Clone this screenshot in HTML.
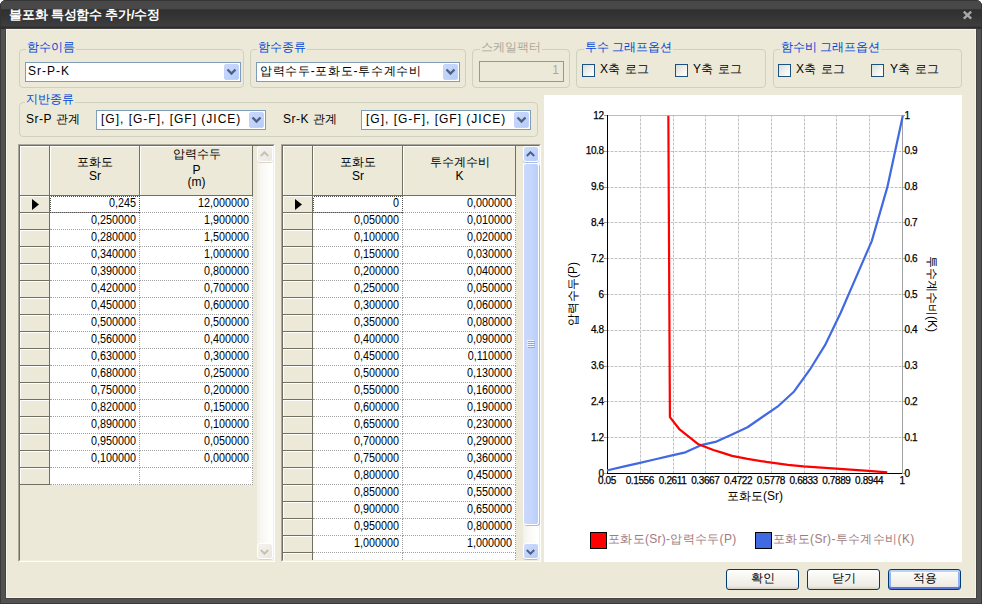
<!DOCTYPE html><html><head><meta charset="utf-8"><style>
*{box-sizing:border-box;margin:0;padding:0}
html,body{width:982px;height:605px;overflow:hidden;background:#fff;font-family:"Liberation Sans",sans-serif;font-size:12px;color:#000}
.a{position:absolute}
#win{position:absolute;left:0;top:0;width:982px;height:604px;background:#525252;border-radius:6px 6px 0 0;overflow:hidden;box-shadow:inset 0 0 0 1px #3A3A3A}
#tb{position:absolute;left:0;top:0;width:982px;height:29px;border-left:1px solid #333;border-right:1px solid #333;background:linear-gradient(#353535 0,#353535 1px,#484848 1px,#484848 9px,#3a3a3a 9px,#303030 10px,#323232 14px,#3e3e3e 26px,#2e2e2e 27px,#2e2e2e 29px)}
#ttl{left:9px;top:6px;color:#fff;font-weight:bold;font-size:13px;white-space:nowrap;letter-spacing:-0.2px}
#close{left:962px;top:10px;width:11px;height:10px}
#body{position:absolute;left:6px;top:29px;width:970px;height:569px;background:#ECE9D8;border:1px solid #F7F5E8;box-shadow:0 0 0 1px #434343}
.grp{position:absolute;border:1px solid #D0D0BF;border-radius:4px}
.gl{position:absolute;color:#0046D5;background:#ECE9D8;padding:0 1px;white-space:nowrap;line-height:13px}
.combo{position:absolute;border:1px solid #7F9DB9;background:#fff;height:20px}
.combo .t{position:absolute;left:2px;top:2px;white-space:nowrap;line-height:13px}
.ddb{position:absolute;right:1px;top:1px;width:15px;height:16px;border-radius:2px;background:linear-gradient(135deg,#CAD8FB 0%,#BFD2FA 60%,#B3CBF9 100%);border:1px solid #C3D3FD}
.ddb svg{position:absolute;left:1px;top:3px}
.chk{position:absolute;width:13px;height:13px;border:1px solid #1C5180;background:linear-gradient(135deg,#DCDCD7 0%,#F0F0EB 50%,#FFFFFF 100%)}
.lbl{position:absolute;white-space:nowrap;line-height:13px}
.btn{position:absolute;width:73px;height:21px;border:1px solid #003C74;border-radius:3px;background:linear-gradient(#FFFFFF 0%,#F6F5F0 40%,#ECEBE4 85%,#D6D0C5 100%);text-align:center;line-height:17px}
.grid{position:absolute;background:#ECE9D8;overflow:hidden}
.hc{position:absolute;background:#ECE9D8;border-right:1px solid #716F64;border-bottom:1px solid #716F64;box-shadow:inset 1px 1px 0 #fff;text-align:center;line-height:12px}
.dc{position:absolute;background:#fff;text-align:right;line-height:16px;padding-right:2px;letter-spacing:-0.4px;font-size:11px}
.num{font-size:13px;transform:scaleX(0.83);transform-origin:100% 50%}
</style></head><body>
<div id="win"><div id="tb"></div>
<div class="a" id="ttl">불포화 특성함수 추가/수정</div>
<svg class="a" id="close" width="11" height="10" viewBox="0 0 11 10"><path d="M1.8 1.6 L9.2 8.6 M9.2 1.6 L1.8 8.6" stroke="#A8A8A8" stroke-width="2.4"/></svg>
<div id="body"></div></div>
<div class="grp" style="left:19px;top:49px;width:225px;height:39px"></div>
<div class="gl" style="left:26px;top:41px">함수이름</div>
<div class="combo" style="left:25px;top:62px;width:216px"><span class="t" style="left:2px;letter-spacing:1px">Sr-P-K</span><div class="ddb"><svg width="11" height="8" viewBox="0 0 11 8"><path d="M1.5 1.5 L5.5 5.5 L9.5 1.5" fill="none" stroke="#4D6185" stroke-width="2.4"/></svg></div></div>
<div class="grp" style="left:250px;top:49px;width:216px;height:39px"></div>
<div class="gl" style="left:257px;top:41px">함수종류</div>
<div class="combo" style="left:256px;top:62px;width:204px"><span class="t" style="left:3px;letter-spacing:0.7px">압력수두-포화도-투수계수비</span><div class="ddb"><svg width="11" height="8" viewBox="0 0 11 8"><path d="M1.5 1.5 L5.5 5.5 L9.5 1.5" fill="none" stroke="#4D6185" stroke-width="2.4"/></svg></div></div>
<div class="grp" style="left:472px;top:49px;width:98px;height:39px"></div>
<div class="gl" style="left:480px;top:41px;color:#ACA899">스케일팩터</div>
<div class="combo" style="left:479px;top:61px;width:85px;height:21px;background:#ECE9D8"><span class="t" style="left:auto;right:4px;color:#ACA899">1</span></div>
<div class="grp" style="left:576px;top:49px;width:190px;height:39px"></div>
<div class="gl" style="left:584px;top:41px">투수 그래프옵션</div>
<div class="chk" style="left:582px;top:64px"></div><div class="lbl" style="left:600px;top:63px;letter-spacing:0.45px">X축 로그</div>
<div class="chk" style="left:675px;top:64px"></div><div class="lbl" style="left:693px;top:63px;letter-spacing:0.45px">Y축 로그</div>
<div class="grp" style="left:773px;top:49px;width:189px;height:39px"></div>
<div class="gl" style="left:780px;top:41px">함수비 그래프옵션</div>
<div class="chk" style="left:778px;top:64px"></div><div class="lbl" style="left:796px;top:63px;letter-spacing:0.45px">X축 로그</div>
<div class="chk" style="left:871px;top:64px"></div><div class="lbl" style="left:890px;top:63px;letter-spacing:0.45px">Y축 로그</div>
<div class="grp" style="left:19px;top:102px;width:519px;height:35px"></div>
<div class="gl" style="left:25px;top:93px">지반종류</div>
<div class="lbl" style="left:26px;top:113px;letter-spacing:0.5px">Sr-P 관계</div>
<div class="combo" style="left:96px;top:110px;width:170px"><span class="t" style="left:4px;letter-spacing:1px">[G], [G-F], [GF] (JICE)</span><div class="ddb"><svg width="11" height="8" viewBox="0 0 11 8"><path d="M1.5 1.5 L5.5 5.5 L9.5 1.5" fill="none" stroke="#4D6185" stroke-width="2.4"/></svg></div></div>
<div class="lbl" style="left:283px;top:113px;letter-spacing:0.5px">Sr-K 관계</div>
<div class="combo" style="left:361px;top:110px;width:170px"><span class="t" style="left:4px;letter-spacing:1px">[G], [G-F], [GF] (JICE)</span><div class="ddb"><svg width="11" height="8" viewBox="0 0 11 8"><path d="M1.5 1.5 L5.5 5.5 L9.5 1.5" fill="none" stroke="#4D6185" stroke-width="2.4"/></svg></div></div>
<div class="btn" style="left:726px;top:569px">확인</div>
<div class="btn" style="left:807px;top:569px">닫기</div>
<div class="btn" style="left:888px;top:569px;box-shadow:inset 0 2px 0 #B9D3FA,inset 0 -2px 0 #5778DC,inset 2px 0 0 #93B3F0,inset -2px 0 0 #93B3F0">적용</div>
<div class="a" style="left:18px;top:144px;width:257px;height:418px;background:#ECE9D8;border-left:1px solid #ACA899;border-top:1px solid #ACA899;border-right:1px solid #fff;border-bottom:1px solid #fff"></div>
<div class="a" style="left:19px;top:145px;width:255px;height:416px;border-left:1px solid #716F64;border-top:1px solid #716F64;border-right:1px solid #F1EFE2;border-bottom:1px solid #F1EFE2"></div>
<div class="a" style="left:20px;top:146px;width:237px;height:414px;overflow:hidden">
<div class="hc" style="left:0px;top:0px;width:30px;height:50px"></div>
<div class="hc" style="left:30px;top:0px;width:90px;height:50px"></div>
<div class="a" style="left:30px;top:10px;width:90px;text-align:center;line-height:13px">포화도</div>
<div class="a" style="left:30px;top:24px;width:90px;text-align:center;line-height:13px">Sr</div>
<div class="hc" style="left:120px;top:0px;width:113px;height:50px"></div>
<div class="a" style="left:120px;top:2px;width:113px;text-align:center;line-height:13px">압력수두</div>
<div class="a" style="left:120px;top:18px;width:113px;text-align:center;line-height:13px">P</div>
<div class="a" style="left:120px;top:30px;width:113px;text-align:center;line-height:13px">(m)</div>
<div class="hc" style="left:0px;top:50px;width:30px;height:17px"></div>
<svg class="a" style="left:12px;top:53px" width="7" height="11"><path d="M0 0 L7 5.5 L0 11Z" fill="#000"/></svg>
<div class="a" style="left:30px;top:50px;width:90px;height:17px;background:#fff;border-right:1px dotted #A0A0A0;border-bottom:1px dotted #A0A0A0"></div>
<div class="a num" style="left:30px;top:50px;width:86px;text-align:right;line-height:14px">0,245</div>
<svg class="a" style="left:30px;top:50px" width="90" height="17"><rect x="0.5" y="0.5" width="89" height="16" fill="none" stroke="#505050" stroke-dasharray="1,1" shape-rendering="crispEdges"/></svg>
<div class="a" style="left:120px;top:50px;width:113px;height:17px;background:#fff;border-right:1px dotted #A0A0A0;border-bottom:1px dotted #A0A0A0"></div>
<div class="a num" style="left:120px;top:50px;width:109px;text-align:right;line-height:14px">12,000000</div>
<div class="hc" style="left:0px;top:67px;width:30px;height:17px"></div>
<div class="a" style="left:30px;top:67px;width:90px;height:17px;background:#fff;border-right:1px dotted #A0A0A0;border-bottom:1px dotted #A0A0A0"></div>
<div class="a num" style="left:30px;top:67px;width:86px;text-align:right;line-height:14px">0,250000</div>
<div class="a" style="left:120px;top:67px;width:113px;height:17px;background:#fff;border-right:1px dotted #A0A0A0;border-bottom:1px dotted #A0A0A0"></div>
<div class="a num" style="left:120px;top:67px;width:109px;text-align:right;line-height:14px">1,900000</div>
<div class="hc" style="left:0px;top:84px;width:30px;height:17px"></div>
<div class="a" style="left:30px;top:84px;width:90px;height:17px;background:#fff;border-right:1px dotted #A0A0A0;border-bottom:1px dotted #A0A0A0"></div>
<div class="a num" style="left:30px;top:84px;width:86px;text-align:right;line-height:14px">0,280000</div>
<div class="a" style="left:120px;top:84px;width:113px;height:17px;background:#fff;border-right:1px dotted #A0A0A0;border-bottom:1px dotted #A0A0A0"></div>
<div class="a num" style="left:120px;top:84px;width:109px;text-align:right;line-height:14px">1,500000</div>
<div class="hc" style="left:0px;top:101px;width:30px;height:17px"></div>
<div class="a" style="left:30px;top:101px;width:90px;height:17px;background:#fff;border-right:1px dotted #A0A0A0;border-bottom:1px dotted #A0A0A0"></div>
<div class="a num" style="left:30px;top:101px;width:86px;text-align:right;line-height:14px">0,340000</div>
<div class="a" style="left:120px;top:101px;width:113px;height:17px;background:#fff;border-right:1px dotted #A0A0A0;border-bottom:1px dotted #A0A0A0"></div>
<div class="a num" style="left:120px;top:101px;width:109px;text-align:right;line-height:14px">1,000000</div>
<div class="hc" style="left:0px;top:118px;width:30px;height:17px"></div>
<div class="a" style="left:30px;top:118px;width:90px;height:17px;background:#fff;border-right:1px dotted #A0A0A0;border-bottom:1px dotted #A0A0A0"></div>
<div class="a num" style="left:30px;top:118px;width:86px;text-align:right;line-height:14px">0,390000</div>
<div class="a" style="left:120px;top:118px;width:113px;height:17px;background:#fff;border-right:1px dotted #A0A0A0;border-bottom:1px dotted #A0A0A0"></div>
<div class="a num" style="left:120px;top:118px;width:109px;text-align:right;line-height:14px">0,800000</div>
<div class="hc" style="left:0px;top:135px;width:30px;height:17px"></div>
<div class="a" style="left:30px;top:135px;width:90px;height:17px;background:#fff;border-right:1px dotted #A0A0A0;border-bottom:1px dotted #A0A0A0"></div>
<div class="a num" style="left:30px;top:135px;width:86px;text-align:right;line-height:14px">0,420000</div>
<div class="a" style="left:120px;top:135px;width:113px;height:17px;background:#fff;border-right:1px dotted #A0A0A0;border-bottom:1px dotted #A0A0A0"></div>
<div class="a num" style="left:120px;top:135px;width:109px;text-align:right;line-height:14px">0,700000</div>
<div class="hc" style="left:0px;top:152px;width:30px;height:17px"></div>
<div class="a" style="left:30px;top:152px;width:90px;height:17px;background:#fff;border-right:1px dotted #A0A0A0;border-bottom:1px dotted #A0A0A0"></div>
<div class="a num" style="left:30px;top:152px;width:86px;text-align:right;line-height:14px">0,450000</div>
<div class="a" style="left:120px;top:152px;width:113px;height:17px;background:#fff;border-right:1px dotted #A0A0A0;border-bottom:1px dotted #A0A0A0"></div>
<div class="a num" style="left:120px;top:152px;width:109px;text-align:right;line-height:14px">0,600000</div>
<div class="hc" style="left:0px;top:169px;width:30px;height:17px"></div>
<div class="a" style="left:30px;top:169px;width:90px;height:17px;background:#fff;border-right:1px dotted #A0A0A0;border-bottom:1px dotted #A0A0A0"></div>
<div class="a num" style="left:30px;top:169px;width:86px;text-align:right;line-height:14px">0,500000</div>
<div class="a" style="left:120px;top:169px;width:113px;height:17px;background:#fff;border-right:1px dotted #A0A0A0;border-bottom:1px dotted #A0A0A0"></div>
<div class="a num" style="left:120px;top:169px;width:109px;text-align:right;line-height:14px">0,500000</div>
<div class="hc" style="left:0px;top:186px;width:30px;height:17px"></div>
<div class="a" style="left:30px;top:186px;width:90px;height:17px;background:#fff;border-right:1px dotted #A0A0A0;border-bottom:1px dotted #A0A0A0"></div>
<div class="a num" style="left:30px;top:186px;width:86px;text-align:right;line-height:14px">0,560000</div>
<div class="a" style="left:120px;top:186px;width:113px;height:17px;background:#fff;border-right:1px dotted #A0A0A0;border-bottom:1px dotted #A0A0A0"></div>
<div class="a num" style="left:120px;top:186px;width:109px;text-align:right;line-height:14px">0,400000</div>
<div class="hc" style="left:0px;top:203px;width:30px;height:17px"></div>
<div class="a" style="left:30px;top:203px;width:90px;height:17px;background:#fff;border-right:1px dotted #A0A0A0;border-bottom:1px dotted #A0A0A0"></div>
<div class="a num" style="left:30px;top:203px;width:86px;text-align:right;line-height:14px">0,630000</div>
<div class="a" style="left:120px;top:203px;width:113px;height:17px;background:#fff;border-right:1px dotted #A0A0A0;border-bottom:1px dotted #A0A0A0"></div>
<div class="a num" style="left:120px;top:203px;width:109px;text-align:right;line-height:14px">0,300000</div>
<div class="hc" style="left:0px;top:220px;width:30px;height:17px"></div>
<div class="a" style="left:30px;top:220px;width:90px;height:17px;background:#fff;border-right:1px dotted #A0A0A0;border-bottom:1px dotted #A0A0A0"></div>
<div class="a num" style="left:30px;top:220px;width:86px;text-align:right;line-height:14px">0,680000</div>
<div class="a" style="left:120px;top:220px;width:113px;height:17px;background:#fff;border-right:1px dotted #A0A0A0;border-bottom:1px dotted #A0A0A0"></div>
<div class="a num" style="left:120px;top:220px;width:109px;text-align:right;line-height:14px">0,250000</div>
<div class="hc" style="left:0px;top:237px;width:30px;height:17px"></div>
<div class="a" style="left:30px;top:237px;width:90px;height:17px;background:#fff;border-right:1px dotted #A0A0A0;border-bottom:1px dotted #A0A0A0"></div>
<div class="a num" style="left:30px;top:237px;width:86px;text-align:right;line-height:14px">0,750000</div>
<div class="a" style="left:120px;top:237px;width:113px;height:17px;background:#fff;border-right:1px dotted #A0A0A0;border-bottom:1px dotted #A0A0A0"></div>
<div class="a num" style="left:120px;top:237px;width:109px;text-align:right;line-height:14px">0,200000</div>
<div class="hc" style="left:0px;top:254px;width:30px;height:17px"></div>
<div class="a" style="left:30px;top:254px;width:90px;height:17px;background:#fff;border-right:1px dotted #A0A0A0;border-bottom:1px dotted #A0A0A0"></div>
<div class="a num" style="left:30px;top:254px;width:86px;text-align:right;line-height:14px">0,820000</div>
<div class="a" style="left:120px;top:254px;width:113px;height:17px;background:#fff;border-right:1px dotted #A0A0A0;border-bottom:1px dotted #A0A0A0"></div>
<div class="a num" style="left:120px;top:254px;width:109px;text-align:right;line-height:14px">0,150000</div>
<div class="hc" style="left:0px;top:271px;width:30px;height:17px"></div>
<div class="a" style="left:30px;top:271px;width:90px;height:17px;background:#fff;border-right:1px dotted #A0A0A0;border-bottom:1px dotted #A0A0A0"></div>
<div class="a num" style="left:30px;top:271px;width:86px;text-align:right;line-height:14px">0,890000</div>
<div class="a" style="left:120px;top:271px;width:113px;height:17px;background:#fff;border-right:1px dotted #A0A0A0;border-bottom:1px dotted #A0A0A0"></div>
<div class="a num" style="left:120px;top:271px;width:109px;text-align:right;line-height:14px">0,100000</div>
<div class="hc" style="left:0px;top:288px;width:30px;height:17px"></div>
<div class="a" style="left:30px;top:288px;width:90px;height:17px;background:#fff;border-right:1px dotted #A0A0A0;border-bottom:1px dotted #A0A0A0"></div>
<div class="a num" style="left:30px;top:288px;width:86px;text-align:right;line-height:14px">0,950000</div>
<div class="a" style="left:120px;top:288px;width:113px;height:17px;background:#fff;border-right:1px dotted #A0A0A0;border-bottom:1px dotted #A0A0A0"></div>
<div class="a num" style="left:120px;top:288px;width:109px;text-align:right;line-height:14px">0,050000</div>
<div class="hc" style="left:0px;top:305px;width:30px;height:17px"></div>
<div class="a" style="left:30px;top:305px;width:90px;height:17px;background:#fff;border-right:1px dotted #A0A0A0;border-bottom:1px dotted #A0A0A0"></div>
<div class="a num" style="left:30px;top:305px;width:86px;text-align:right;line-height:14px">0,100000</div>
<div class="a" style="left:120px;top:305px;width:113px;height:17px;background:#fff;border-right:1px dotted #A0A0A0;border-bottom:1px dotted #A0A0A0"></div>
<div class="a num" style="left:120px;top:305px;width:109px;text-align:right;line-height:14px">0,000000</div>
<div class="hc" style="left:0px;top:322px;width:30px;height:17px"></div>
<div class="a" style="left:30px;top:322px;width:90px;height:17px;background:#fff;border-right:1px dotted #A0A0A0;border-bottom:1px dotted #A0A0A0"></div>
<div class="a" style="left:120px;top:322px;width:113px;height:17px;background:#fff;border-right:1px dotted #A0A0A0;border-bottom:1px dotted #A0A0A0"></div>
</div>
<div class="a" style="left:257px;top:146px;width:16px;height:414px;background:linear-gradient(90deg,#F3F1EA 0%,#FAF9F4 40%,#FEFEFB 80%,#FFFFFF 100%)"></div>
<div class="a" style="left:257px;top:146px;width:16px;height:16px;border:1px solid #fff;border-radius:3px;background:linear-gradient(135deg,#F3F2ED 0%,#EEEDE6 60%,#E8E6DD 100%);box-shadow:0 1px 0 #D8D5C7"><div class="a" style="left:2px;top:4px;line-height:0"><svg width="9" height="6" viewBox="0 0 9 6"><path d="M0.8 5 L4.5 1.3 L8.2 5" fill="none" stroke="#C5C2B2" stroke-width="2"/></svg></div></div>
<div class="a" style="left:257px;top:543px;width:16px;height:16px;border:1px solid #fff;border-radius:3px;background:linear-gradient(135deg,#F3F2ED 0%,#EEEDE6 60%,#E8E6DD 100%);box-shadow:0 1px 0 #D8D5C7"><div class="a" style="left:2px;top:5px;line-height:0"><svg width="9" height="6" viewBox="0 0 9 6"><path d="M0.8 1 L4.5 4.7 L8.2 1" fill="none" stroke="#C5C2B2" stroke-width="2"/></svg></div></div>
<div class="a" style="left:281px;top:144px;width:260px;height:418px;background:#ECE9D8;border-left:1px solid #ACA899;border-top:1px solid #ACA899;border-right:1px solid #fff;border-bottom:1px solid #fff"></div>
<div class="a" style="left:282px;top:145px;width:258px;height:416px;border-left:1px solid #716F64;border-top:1px solid #716F64;border-right:1px solid #F1EFE2;border-bottom:1px solid #F1EFE2"></div>
<div class="a" style="left:283px;top:146px;width:240px;height:414px;overflow:hidden">
<div class="hc" style="left:0px;top:0px;width:30px;height:50px"></div>
<div class="hc" style="left:30px;top:0px;width:90px;height:50px"></div>
<div class="a" style="left:30px;top:10px;width:90px;text-align:center;line-height:13px">포화도</div>
<div class="a" style="left:30px;top:24px;width:90px;text-align:center;line-height:13px">Sr</div>
<div class="hc" style="left:120px;top:0px;width:113px;height:50px"></div>
<div class="a" style="left:120px;top:10px;width:113px;text-align:center;line-height:13px">투수계수비</div>
<div class="a" style="left:120px;top:24px;width:113px;text-align:center;line-height:13px">K</div>
<div class="hc" style="left:0px;top:50px;width:30px;height:17px"></div>
<svg class="a" style="left:12px;top:53px" width="7" height="11"><path d="M0 0 L7 5.5 L0 11Z" fill="#000"/></svg>
<div class="a" style="left:30px;top:50px;width:90px;height:17px;background:#fff;border-right:1px dotted #A0A0A0;border-bottom:1px dotted #A0A0A0"></div>
<div class="a num" style="left:30px;top:50px;width:86px;text-align:right;line-height:14px">0</div>
<svg class="a" style="left:30px;top:50px" width="90" height="17"><rect x="0.5" y="0.5" width="89" height="16" fill="none" stroke="#505050" stroke-dasharray="1,1" shape-rendering="crispEdges"/></svg>
<div class="a" style="left:120px;top:50px;width:113px;height:17px;background:#fff;border-right:1px dotted #A0A0A0;border-bottom:1px dotted #A0A0A0"></div>
<div class="a num" style="left:120px;top:50px;width:109px;text-align:right;line-height:14px">0,000000</div>
<div class="hc" style="left:0px;top:67px;width:30px;height:17px"></div>
<div class="a" style="left:30px;top:67px;width:90px;height:17px;background:#fff;border-right:1px dotted #A0A0A0;border-bottom:1px dotted #A0A0A0"></div>
<div class="a num" style="left:30px;top:67px;width:86px;text-align:right;line-height:14px">0,050000</div>
<div class="a" style="left:120px;top:67px;width:113px;height:17px;background:#fff;border-right:1px dotted #A0A0A0;border-bottom:1px dotted #A0A0A0"></div>
<div class="a num" style="left:120px;top:67px;width:109px;text-align:right;line-height:14px">0,010000</div>
<div class="hc" style="left:0px;top:84px;width:30px;height:17px"></div>
<div class="a" style="left:30px;top:84px;width:90px;height:17px;background:#fff;border-right:1px dotted #A0A0A0;border-bottom:1px dotted #A0A0A0"></div>
<div class="a num" style="left:30px;top:84px;width:86px;text-align:right;line-height:14px">0,100000</div>
<div class="a" style="left:120px;top:84px;width:113px;height:17px;background:#fff;border-right:1px dotted #A0A0A0;border-bottom:1px dotted #A0A0A0"></div>
<div class="a num" style="left:120px;top:84px;width:109px;text-align:right;line-height:14px">0,020000</div>
<div class="hc" style="left:0px;top:101px;width:30px;height:17px"></div>
<div class="a" style="left:30px;top:101px;width:90px;height:17px;background:#fff;border-right:1px dotted #A0A0A0;border-bottom:1px dotted #A0A0A0"></div>
<div class="a num" style="left:30px;top:101px;width:86px;text-align:right;line-height:14px">0,150000</div>
<div class="a" style="left:120px;top:101px;width:113px;height:17px;background:#fff;border-right:1px dotted #A0A0A0;border-bottom:1px dotted #A0A0A0"></div>
<div class="a num" style="left:120px;top:101px;width:109px;text-align:right;line-height:14px">0,030000</div>
<div class="hc" style="left:0px;top:118px;width:30px;height:17px"></div>
<div class="a" style="left:30px;top:118px;width:90px;height:17px;background:#fff;border-right:1px dotted #A0A0A0;border-bottom:1px dotted #A0A0A0"></div>
<div class="a num" style="left:30px;top:118px;width:86px;text-align:right;line-height:14px">0,200000</div>
<div class="a" style="left:120px;top:118px;width:113px;height:17px;background:#fff;border-right:1px dotted #A0A0A0;border-bottom:1px dotted #A0A0A0"></div>
<div class="a num" style="left:120px;top:118px;width:109px;text-align:right;line-height:14px">0,040000</div>
<div class="hc" style="left:0px;top:135px;width:30px;height:17px"></div>
<div class="a" style="left:30px;top:135px;width:90px;height:17px;background:#fff;border-right:1px dotted #A0A0A0;border-bottom:1px dotted #A0A0A0"></div>
<div class="a num" style="left:30px;top:135px;width:86px;text-align:right;line-height:14px">0,250000</div>
<div class="a" style="left:120px;top:135px;width:113px;height:17px;background:#fff;border-right:1px dotted #A0A0A0;border-bottom:1px dotted #A0A0A0"></div>
<div class="a num" style="left:120px;top:135px;width:109px;text-align:right;line-height:14px">0,050000</div>
<div class="hc" style="left:0px;top:152px;width:30px;height:17px"></div>
<div class="a" style="left:30px;top:152px;width:90px;height:17px;background:#fff;border-right:1px dotted #A0A0A0;border-bottom:1px dotted #A0A0A0"></div>
<div class="a num" style="left:30px;top:152px;width:86px;text-align:right;line-height:14px">0,300000</div>
<div class="a" style="left:120px;top:152px;width:113px;height:17px;background:#fff;border-right:1px dotted #A0A0A0;border-bottom:1px dotted #A0A0A0"></div>
<div class="a num" style="left:120px;top:152px;width:109px;text-align:right;line-height:14px">0,060000</div>
<div class="hc" style="left:0px;top:169px;width:30px;height:17px"></div>
<div class="a" style="left:30px;top:169px;width:90px;height:17px;background:#fff;border-right:1px dotted #A0A0A0;border-bottom:1px dotted #A0A0A0"></div>
<div class="a num" style="left:30px;top:169px;width:86px;text-align:right;line-height:14px">0,350000</div>
<div class="a" style="left:120px;top:169px;width:113px;height:17px;background:#fff;border-right:1px dotted #A0A0A0;border-bottom:1px dotted #A0A0A0"></div>
<div class="a num" style="left:120px;top:169px;width:109px;text-align:right;line-height:14px">0,080000</div>
<div class="hc" style="left:0px;top:186px;width:30px;height:17px"></div>
<div class="a" style="left:30px;top:186px;width:90px;height:17px;background:#fff;border-right:1px dotted #A0A0A0;border-bottom:1px dotted #A0A0A0"></div>
<div class="a num" style="left:30px;top:186px;width:86px;text-align:right;line-height:14px">0,400000</div>
<div class="a" style="left:120px;top:186px;width:113px;height:17px;background:#fff;border-right:1px dotted #A0A0A0;border-bottom:1px dotted #A0A0A0"></div>
<div class="a num" style="left:120px;top:186px;width:109px;text-align:right;line-height:14px">0,090000</div>
<div class="hc" style="left:0px;top:203px;width:30px;height:17px"></div>
<div class="a" style="left:30px;top:203px;width:90px;height:17px;background:#fff;border-right:1px dotted #A0A0A0;border-bottom:1px dotted #A0A0A0"></div>
<div class="a num" style="left:30px;top:203px;width:86px;text-align:right;line-height:14px">0,450000</div>
<div class="a" style="left:120px;top:203px;width:113px;height:17px;background:#fff;border-right:1px dotted #A0A0A0;border-bottom:1px dotted #A0A0A0"></div>
<div class="a num" style="left:120px;top:203px;width:109px;text-align:right;line-height:14px">0,110000</div>
<div class="hc" style="left:0px;top:220px;width:30px;height:17px"></div>
<div class="a" style="left:30px;top:220px;width:90px;height:17px;background:#fff;border-right:1px dotted #A0A0A0;border-bottom:1px dotted #A0A0A0"></div>
<div class="a num" style="left:30px;top:220px;width:86px;text-align:right;line-height:14px">0,500000</div>
<div class="a" style="left:120px;top:220px;width:113px;height:17px;background:#fff;border-right:1px dotted #A0A0A0;border-bottom:1px dotted #A0A0A0"></div>
<div class="a num" style="left:120px;top:220px;width:109px;text-align:right;line-height:14px">0,130000</div>
<div class="hc" style="left:0px;top:237px;width:30px;height:17px"></div>
<div class="a" style="left:30px;top:237px;width:90px;height:17px;background:#fff;border-right:1px dotted #A0A0A0;border-bottom:1px dotted #A0A0A0"></div>
<div class="a num" style="left:30px;top:237px;width:86px;text-align:right;line-height:14px">0,550000</div>
<div class="a" style="left:120px;top:237px;width:113px;height:17px;background:#fff;border-right:1px dotted #A0A0A0;border-bottom:1px dotted #A0A0A0"></div>
<div class="a num" style="left:120px;top:237px;width:109px;text-align:right;line-height:14px">0,160000</div>
<div class="hc" style="left:0px;top:254px;width:30px;height:17px"></div>
<div class="a" style="left:30px;top:254px;width:90px;height:17px;background:#fff;border-right:1px dotted #A0A0A0;border-bottom:1px dotted #A0A0A0"></div>
<div class="a num" style="left:30px;top:254px;width:86px;text-align:right;line-height:14px">0,600000</div>
<div class="a" style="left:120px;top:254px;width:113px;height:17px;background:#fff;border-right:1px dotted #A0A0A0;border-bottom:1px dotted #A0A0A0"></div>
<div class="a num" style="left:120px;top:254px;width:109px;text-align:right;line-height:14px">0,190000</div>
<div class="hc" style="left:0px;top:271px;width:30px;height:17px"></div>
<div class="a" style="left:30px;top:271px;width:90px;height:17px;background:#fff;border-right:1px dotted #A0A0A0;border-bottom:1px dotted #A0A0A0"></div>
<div class="a num" style="left:30px;top:271px;width:86px;text-align:right;line-height:14px">0,650000</div>
<div class="a" style="left:120px;top:271px;width:113px;height:17px;background:#fff;border-right:1px dotted #A0A0A0;border-bottom:1px dotted #A0A0A0"></div>
<div class="a num" style="left:120px;top:271px;width:109px;text-align:right;line-height:14px">0,230000</div>
<div class="hc" style="left:0px;top:288px;width:30px;height:17px"></div>
<div class="a" style="left:30px;top:288px;width:90px;height:17px;background:#fff;border-right:1px dotted #A0A0A0;border-bottom:1px dotted #A0A0A0"></div>
<div class="a num" style="left:30px;top:288px;width:86px;text-align:right;line-height:14px">0,700000</div>
<div class="a" style="left:120px;top:288px;width:113px;height:17px;background:#fff;border-right:1px dotted #A0A0A0;border-bottom:1px dotted #A0A0A0"></div>
<div class="a num" style="left:120px;top:288px;width:109px;text-align:right;line-height:14px">0,290000</div>
<div class="hc" style="left:0px;top:305px;width:30px;height:17px"></div>
<div class="a" style="left:30px;top:305px;width:90px;height:17px;background:#fff;border-right:1px dotted #A0A0A0;border-bottom:1px dotted #A0A0A0"></div>
<div class="a num" style="left:30px;top:305px;width:86px;text-align:right;line-height:14px">0,750000</div>
<div class="a" style="left:120px;top:305px;width:113px;height:17px;background:#fff;border-right:1px dotted #A0A0A0;border-bottom:1px dotted #A0A0A0"></div>
<div class="a num" style="left:120px;top:305px;width:109px;text-align:right;line-height:14px">0,360000</div>
<div class="hc" style="left:0px;top:322px;width:30px;height:17px"></div>
<div class="a" style="left:30px;top:322px;width:90px;height:17px;background:#fff;border-right:1px dotted #A0A0A0;border-bottom:1px dotted #A0A0A0"></div>
<div class="a num" style="left:30px;top:322px;width:86px;text-align:right;line-height:14px">0,800000</div>
<div class="a" style="left:120px;top:322px;width:113px;height:17px;background:#fff;border-right:1px dotted #A0A0A0;border-bottom:1px dotted #A0A0A0"></div>
<div class="a num" style="left:120px;top:322px;width:109px;text-align:right;line-height:14px">0,450000</div>
<div class="hc" style="left:0px;top:339px;width:30px;height:17px"></div>
<div class="a" style="left:30px;top:339px;width:90px;height:17px;background:#fff;border-right:1px dotted #A0A0A0;border-bottom:1px dotted #A0A0A0"></div>
<div class="a num" style="left:30px;top:339px;width:86px;text-align:right;line-height:14px">0,850000</div>
<div class="a" style="left:120px;top:339px;width:113px;height:17px;background:#fff;border-right:1px dotted #A0A0A0;border-bottom:1px dotted #A0A0A0"></div>
<div class="a num" style="left:120px;top:339px;width:109px;text-align:right;line-height:14px">0,550000</div>
<div class="hc" style="left:0px;top:356px;width:30px;height:17px"></div>
<div class="a" style="left:30px;top:356px;width:90px;height:17px;background:#fff;border-right:1px dotted #A0A0A0;border-bottom:1px dotted #A0A0A0"></div>
<div class="a num" style="left:30px;top:356px;width:86px;text-align:right;line-height:14px">0,900000</div>
<div class="a" style="left:120px;top:356px;width:113px;height:17px;background:#fff;border-right:1px dotted #A0A0A0;border-bottom:1px dotted #A0A0A0"></div>
<div class="a num" style="left:120px;top:356px;width:109px;text-align:right;line-height:14px">0,650000</div>
<div class="hc" style="left:0px;top:373px;width:30px;height:17px"></div>
<div class="a" style="left:30px;top:373px;width:90px;height:17px;background:#fff;border-right:1px dotted #A0A0A0;border-bottom:1px dotted #A0A0A0"></div>
<div class="a num" style="left:30px;top:373px;width:86px;text-align:right;line-height:14px">0,950000</div>
<div class="a" style="left:120px;top:373px;width:113px;height:17px;background:#fff;border-right:1px dotted #A0A0A0;border-bottom:1px dotted #A0A0A0"></div>
<div class="a num" style="left:120px;top:373px;width:109px;text-align:right;line-height:14px">0,800000</div>
<div class="hc" style="left:0px;top:390px;width:30px;height:17px"></div>
<div class="a" style="left:30px;top:390px;width:90px;height:17px;background:#fff;border-right:1px dotted #A0A0A0;border-bottom:1px dotted #A0A0A0"></div>
<div class="a num" style="left:30px;top:390px;width:86px;text-align:right;line-height:14px">1,000000</div>
<div class="a" style="left:120px;top:390px;width:113px;height:17px;background:#fff;border-right:1px dotted #A0A0A0;border-bottom:1px dotted #A0A0A0"></div>
<div class="a num" style="left:120px;top:390px;width:109px;text-align:right;line-height:14px">1,000000</div>
<div class="hc" style="left:0px;top:407px;width:30px;height:17px"></div>
<div class="a" style="left:30px;top:407px;width:90px;height:17px;background:#fff;border-right:1px dotted #A0A0A0;border-bottom:1px dotted #A0A0A0"></div>
<div class="a" style="left:120px;top:407px;width:113px;height:17px;background:#fff;border-right:1px dotted #A0A0A0;border-bottom:1px dotted #A0A0A0"></div>
</div>
<div class="a" style="left:523px;top:146px;width:16px;height:414px;background:linear-gradient(90deg,#F3F1EA 0%,#FAF9F4 40%,#FEFEFB 80%,#FFFFFF 100%)"></div>
<div class="a" style="left:523px;top:146px;width:16px;height:16px;border:1px solid #fff;border-radius:3px;background:linear-gradient(135deg,#CDDCFC 0%,#C1D3FB 55%,#B4CAF9 100%);box-shadow:0 1px 0 #A8BDE6"><div class="a" style="left:2px;top:4px;line-height:0"><svg width="9" height="6" viewBox="0 0 9 6"><path d="M0.8 5 L4.5 1.3 L8.2 5" fill="none" stroke="#4D6185" stroke-width="2"/></svg></div></div>
<div class="a" style="left:523px;top:543px;width:16px;height:16px;border:1px solid #fff;border-radius:3px;background:linear-gradient(135deg,#CDDCFC 0%,#C1D3FB 55%,#B4CAF9 100%);box-shadow:0 1px 0 #A8BDE6"><div class="a" style="left:2px;top:5px;line-height:0"><svg width="9" height="6" viewBox="0 0 9 6"><path d="M0.8 1 L4.5 4.7 L8.2 1" fill="none" stroke="#4D6185" stroke-width="2"/></svg></div></div>
<div class="a" style="left:523px;top:163px;width:16px;height:362px;border:1px solid #fff;border-radius:3px;background:linear-gradient(90deg,#CAD9FC 0%,#C6D6FB 50%,#B9CEFA 100%);box-shadow:1px 1px 0 #A8BDE6"></div>
<div class="a" style="left:527px;top:340px;width:7px;height:1px;background:#EEF4FF"></div>
<div class="a" style="left:528px;top:341px;width:7px;height:1px;background:#8CA7E6"></div>
<div class="a" style="left:527px;top:342px;width:7px;height:1px;background:#EEF4FF"></div>
<div class="a" style="left:528px;top:343px;width:7px;height:1px;background:#8CA7E6"></div>
<div class="a" style="left:527px;top:344px;width:7px;height:1px;background:#EEF4FF"></div>
<div class="a" style="left:528px;top:345px;width:7px;height:1px;background:#8CA7E6"></div>
<div class="a" style="left:527px;top:346px;width:7px;height:1px;background:#EEF4FF"></div>
<div class="a" style="left:528px;top:347px;width:7px;height:1px;background:#8CA7E6"></div>
<div class="a" style="left:544px;top:95px;width:418px;height:467px;background:#fff"></div>
<svg class="a" style="left:0;top:0" width="982" height="605" viewBox="0 0 982 605">
<defs><clipPath id="pc"><rect x="607" y="113" width="297" height="362"/></clipPath></defs>
<line x1="607" y1="151.5" x2="902" y2="151.5" stroke="#E6E6E6" shape-rendering="crispEdges"/><line x1="607" y1="151.5" x2="902" y2="151.5" stroke="#C0C0C0" stroke-dasharray="2,2" shape-rendering="crispEdges"/>
<line x1="607" y1="187.5" x2="902" y2="187.5" stroke="#E6E6E6" shape-rendering="crispEdges"/><line x1="607" y1="187.5" x2="902" y2="187.5" stroke="#C0C0C0" stroke-dasharray="2,2" shape-rendering="crispEdges"/>
<line x1="607" y1="222.5" x2="902" y2="222.5" stroke="#E6E6E6" shape-rendering="crispEdges"/><line x1="607" y1="222.5" x2="902" y2="222.5" stroke="#C0C0C0" stroke-dasharray="2,2" shape-rendering="crispEdges"/>
<line x1="607" y1="258.5" x2="902" y2="258.5" stroke="#E6E6E6" shape-rendering="crispEdges"/><line x1="607" y1="258.5" x2="902" y2="258.5" stroke="#C0C0C0" stroke-dasharray="2,2" shape-rendering="crispEdges"/>
<line x1="607" y1="294.5" x2="902" y2="294.5" stroke="#E6E6E6" shape-rendering="crispEdges"/><line x1="607" y1="294.5" x2="902" y2="294.5" stroke="#C0C0C0" stroke-dasharray="2,2" shape-rendering="crispEdges"/>
<line x1="607" y1="330.5" x2="902" y2="330.5" stroke="#E6E6E6" shape-rendering="crispEdges"/><line x1="607" y1="330.5" x2="902" y2="330.5" stroke="#C0C0C0" stroke-dasharray="2,2" shape-rendering="crispEdges"/>
<line x1="607" y1="366.5" x2="902" y2="366.5" stroke="#E6E6E6" shape-rendering="crispEdges"/><line x1="607" y1="366.5" x2="902" y2="366.5" stroke="#C0C0C0" stroke-dasharray="2,2" shape-rendering="crispEdges"/>
<line x1="607" y1="401.5" x2="902" y2="401.5" stroke="#E6E6E6" shape-rendering="crispEdges"/><line x1="607" y1="401.5" x2="902" y2="401.5" stroke="#C0C0C0" stroke-dasharray="2,2" shape-rendering="crispEdges"/>
<line x1="607" y1="437.5" x2="902" y2="437.5" stroke="#E6E6E6" shape-rendering="crispEdges"/><line x1="607" y1="437.5" x2="902" y2="437.5" stroke="#C0C0C0" stroke-dasharray="2,2" shape-rendering="crispEdges"/>
<line x1="607" y1="115.5" x2="902" y2="115.5" stroke="#BDBDBD" shape-rendering="crispEdges"/>
<line x1="640.5" y1="115" x2="640.5" y2="473" stroke="#E6E6E6" shape-rendering="crispEdges"/><line x1="640.5" y1="115" x2="640.5" y2="473" stroke="#C0C0C0" stroke-dasharray="2,2" shape-rendering="crispEdges"/>
<line x1="673.5" y1="115" x2="673.5" y2="473" stroke="#E6E6E6" shape-rendering="crispEdges"/><line x1="673.5" y1="115" x2="673.5" y2="473" stroke="#C0C0C0" stroke-dasharray="2,2" shape-rendering="crispEdges"/>
<line x1="705.5" y1="115" x2="705.5" y2="473" stroke="#E6E6E6" shape-rendering="crispEdges"/><line x1="705.5" y1="115" x2="705.5" y2="473" stroke="#C0C0C0" stroke-dasharray="2,2" shape-rendering="crispEdges"/>
<line x1="738.5" y1="115" x2="738.5" y2="473" stroke="#E6E6E6" shape-rendering="crispEdges"/><line x1="738.5" y1="115" x2="738.5" y2="473" stroke="#C0C0C0" stroke-dasharray="2,2" shape-rendering="crispEdges"/>
<line x1="771.5" y1="115" x2="771.5" y2="473" stroke="#E6E6E6" shape-rendering="crispEdges"/><line x1="771.5" y1="115" x2="771.5" y2="473" stroke="#C0C0C0" stroke-dasharray="2,2" shape-rendering="crispEdges"/>
<line x1="804.5" y1="115" x2="804.5" y2="473" stroke="#E6E6E6" shape-rendering="crispEdges"/><line x1="804.5" y1="115" x2="804.5" y2="473" stroke="#C0C0C0" stroke-dasharray="2,2" shape-rendering="crispEdges"/>
<line x1="836.5" y1="115" x2="836.5" y2="473" stroke="#E6E6E6" shape-rendering="crispEdges"/><line x1="836.5" y1="115" x2="836.5" y2="473" stroke="#C0C0C0" stroke-dasharray="2,2" shape-rendering="crispEdges"/>
<line x1="869.5" y1="115" x2="869.5" y2="473" stroke="#E6E6E6" shape-rendering="crispEdges"/><line x1="869.5" y1="115" x2="869.5" y2="473" stroke="#C0C0C0" stroke-dasharray="2,2" shape-rendering="crispEdges"/>
<line x1="607.5" y1="115" x2="607.5" y2="474" stroke="#000" shape-rendering="crispEdges"/>
<line x1="607" y1="473.5" x2="903" y2="473.5" stroke="#000" shape-rendering="crispEdges"/>
<line x1="902.5" y1="115" x2="902.5" y2="473" stroke="#A0A0A0" shape-rendering="crispEdges"/>
<line x1="604" y1="115.5" x2="607" y2="115.5" stroke="#A0A0A0" shape-rendering="crispEdges"/>
<line x1="902" y1="115.5" x2="905" y2="115.5" stroke="#A0A0A0" shape-rendering="crispEdges"/>
<line x1="604" y1="151.5" x2="607" y2="151.5" stroke="#A0A0A0" shape-rendering="crispEdges"/>
<line x1="902" y1="151.5" x2="905" y2="151.5" stroke="#A0A0A0" shape-rendering="crispEdges"/>
<line x1="604" y1="187.5" x2="607" y2="187.5" stroke="#A0A0A0" shape-rendering="crispEdges"/>
<line x1="902" y1="187.5" x2="905" y2="187.5" stroke="#A0A0A0" shape-rendering="crispEdges"/>
<line x1="604" y1="222.5" x2="607" y2="222.5" stroke="#A0A0A0" shape-rendering="crispEdges"/>
<line x1="902" y1="222.5" x2="905" y2="222.5" stroke="#A0A0A0" shape-rendering="crispEdges"/>
<line x1="604" y1="258.5" x2="607" y2="258.5" stroke="#A0A0A0" shape-rendering="crispEdges"/>
<line x1="902" y1="258.5" x2="905" y2="258.5" stroke="#A0A0A0" shape-rendering="crispEdges"/>
<line x1="604" y1="294.5" x2="607" y2="294.5" stroke="#A0A0A0" shape-rendering="crispEdges"/>
<line x1="902" y1="294.5" x2="905" y2="294.5" stroke="#A0A0A0" shape-rendering="crispEdges"/>
<line x1="604" y1="330.5" x2="607" y2="330.5" stroke="#A0A0A0" shape-rendering="crispEdges"/>
<line x1="902" y1="330.5" x2="905" y2="330.5" stroke="#A0A0A0" shape-rendering="crispEdges"/>
<line x1="604" y1="366.5" x2="607" y2="366.5" stroke="#A0A0A0" shape-rendering="crispEdges"/>
<line x1="902" y1="366.5" x2="905" y2="366.5" stroke="#A0A0A0" shape-rendering="crispEdges"/>
<line x1="604" y1="401.5" x2="607" y2="401.5" stroke="#A0A0A0" shape-rendering="crispEdges"/>
<line x1="902" y1="401.5" x2="905" y2="401.5" stroke="#A0A0A0" shape-rendering="crispEdges"/>
<line x1="604" y1="437.5" x2="607" y2="437.5" stroke="#A0A0A0" shape-rendering="crispEdges"/>
<line x1="902" y1="437.5" x2="905" y2="437.5" stroke="#A0A0A0" shape-rendering="crispEdges"/>
<line x1="604" y1="473.5" x2="607" y2="473.5" stroke="#A0A0A0" shape-rendering="crispEdges"/>
<line x1="902" y1="473.5" x2="905" y2="473.5" stroke="#A0A0A0" shape-rendering="crispEdges"/>
<g clip-path="url(#pc)"><g transform="translate(0.8,0.8)"><polyline points="591.47,473.00 607.00,469.42 622.53,465.84 638.05,462.26 653.58,458.68 669.11,455.10 684.63,451.52 700.16,444.36 715.68,440.78 731.21,433.62 746.74,426.46 762.26,415.72 777.79,404.98 793.32,390.66 808.84,369.18 824.37,344.12 839.89,311.90 855.42,276.10 870.95,240.30 886.47,186.60 902.00,115.00" fill="none" stroke="#4169E1" stroke-width="2.2" stroke-linejoin="round"/>
<polyline points="667.55,115.00 669.11,416.32 678.42,428.25 697.05,443.17 712.58,449.13 721.89,452.12 731.21,455.10 746.74,458.08 765.37,461.07 787.11,464.05 802.63,465.54 824.37,467.03 846.11,468.52 867.84,470.02 886.47,471.51" fill="none" stroke="#FF0000" stroke-width="2.2" stroke-linejoin="round"/></g></g>
<text x="603.6" y="476.5" text-anchor="end" font-family="Liberation Sans" font-size="10" letter-spacing="-0.4" stroke="#000" stroke-width="0.25">0</text>
<text x="904.5" y="476.5" font-family="Liberation Sans" font-size="10" letter-spacing="-0.4" stroke="#000" stroke-width="0.25">0</text>
<text x="603.6" y="440.7" text-anchor="end" font-family="Liberation Sans" font-size="10" letter-spacing="-0.4" stroke="#000" stroke-width="0.25">1.2</text>
<text x="904.5" y="440.7" font-family="Liberation Sans" font-size="10" letter-spacing="-0.4" stroke="#000" stroke-width="0.25">0.1</text>
<text x="603.6" y="404.9" text-anchor="end" font-family="Liberation Sans" font-size="10" letter-spacing="-0.4" stroke="#000" stroke-width="0.25">2.4</text>
<text x="904.5" y="404.9" font-family="Liberation Sans" font-size="10" letter-spacing="-0.4" stroke="#000" stroke-width="0.25">0.2</text>
<text x="603.6" y="369.1" text-anchor="end" font-family="Liberation Sans" font-size="10" letter-spacing="-0.4" stroke="#000" stroke-width="0.25">3.6</text>
<text x="904.5" y="369.1" font-family="Liberation Sans" font-size="10" letter-spacing="-0.4" stroke="#000" stroke-width="0.25">0.3</text>
<text x="603.6" y="333.3" text-anchor="end" font-family="Liberation Sans" font-size="10" letter-spacing="-0.4" stroke="#000" stroke-width="0.25">4.8</text>
<text x="904.5" y="333.3" font-family="Liberation Sans" font-size="10" letter-spacing="-0.4" stroke="#000" stroke-width="0.25">0.4</text>
<text x="603.6" y="297.5" text-anchor="end" font-family="Liberation Sans" font-size="10" letter-spacing="-0.4" stroke="#000" stroke-width="0.25">6</text>
<text x="904.5" y="297.5" font-family="Liberation Sans" font-size="10" letter-spacing="-0.4" stroke="#000" stroke-width="0.25">0.5</text>
<text x="603.6" y="261.7" text-anchor="end" font-family="Liberation Sans" font-size="10" letter-spacing="-0.4" stroke="#000" stroke-width="0.25">7.2</text>
<text x="904.5" y="261.7" font-family="Liberation Sans" font-size="10" letter-spacing="-0.4" stroke="#000" stroke-width="0.25">0.6</text>
<text x="603.6" y="225.9" text-anchor="end" font-family="Liberation Sans" font-size="10" letter-spacing="-0.4" stroke="#000" stroke-width="0.25">8.4</text>
<text x="904.5" y="225.9" font-family="Liberation Sans" font-size="10" letter-spacing="-0.4" stroke="#000" stroke-width="0.25">0.7</text>
<text x="603.6" y="190.1" text-anchor="end" font-family="Liberation Sans" font-size="10" letter-spacing="-0.4" stroke="#000" stroke-width="0.25">9.6</text>
<text x="904.5" y="190.1" font-family="Liberation Sans" font-size="10" letter-spacing="-0.4" stroke="#000" stroke-width="0.25">0.8</text>
<text x="603.6" y="154.3" text-anchor="end" font-family="Liberation Sans" font-size="10" letter-spacing="-0.4" stroke="#000" stroke-width="0.25">10.8</text>
<text x="904.5" y="154.3" font-family="Liberation Sans" font-size="10" letter-spacing="-0.4" stroke="#000" stroke-width="0.25">0.9</text>
<text x="603.6" y="118.5" text-anchor="end" font-family="Liberation Sans" font-size="10" letter-spacing="-0.4" stroke="#000" stroke-width="0.25">12</text>
<text x="904.5" y="118.5" font-family="Liberation Sans" font-size="10" letter-spacing="-0.4" stroke="#000" stroke-width="0.25">1</text>
<text x="607.0" y="483.5" text-anchor="middle" font-family="Liberation Sans" font-size="10" letter-spacing="-0.4" stroke="#000" stroke-width="0.25">0.05</text>
<text x="639.8" y="483.5" text-anchor="middle" font-family="Liberation Sans" font-size="10" letter-spacing="-0.4" stroke="#000" stroke-width="0.25">0.1556</text>
<text x="672.6" y="483.5" text-anchor="middle" font-family="Liberation Sans" font-size="10" letter-spacing="-0.4" stroke="#000" stroke-width="0.25">0.2611</text>
<text x="705.3" y="483.5" text-anchor="middle" font-family="Liberation Sans" font-size="10" letter-spacing="-0.4" stroke="#000" stroke-width="0.25">0.3667</text>
<text x="738.1" y="483.5" text-anchor="middle" font-family="Liberation Sans" font-size="10" letter-spacing="-0.4" stroke="#000" stroke-width="0.25">0.4722</text>
<text x="770.9" y="483.5" text-anchor="middle" font-family="Liberation Sans" font-size="10" letter-spacing="-0.4" stroke="#000" stroke-width="0.25">0.5778</text>
<text x="803.7" y="483.5" text-anchor="middle" font-family="Liberation Sans" font-size="10" letter-spacing="-0.4" stroke="#000" stroke-width="0.25">0.6833</text>
<text x="836.4" y="483.5" text-anchor="middle" font-family="Liberation Sans" font-size="10" letter-spacing="-0.4" stroke="#000" stroke-width="0.25">0.7889</text>
<text x="869.2" y="483.5" text-anchor="middle" font-family="Liberation Sans" font-size="10" letter-spacing="-0.4" stroke="#000" stroke-width="0.25">0.8944</text>
<text x="902.0" y="483.5" text-anchor="middle" font-family="Liberation Sans" font-size="10" letter-spacing="-0.4" stroke="#000" stroke-width="0.25">1</text>
<text x="755" y="500" text-anchor="middle" font-family="Liberation Sans" font-size="12">포화도(Sr)</text>
<text transform="translate(577,294) rotate(-90)" text-anchor="middle" font-family="Liberation Sans" font-size="12">압력수두(P)</text>
<text transform="translate(928,294) rotate(90)" text-anchor="middle" font-family="Liberation Sans" font-size="12">투수계수비(K)</text>
<rect x="590.5" y="532.5" width="16" height="16" fill="#FF0000" stroke="#000"/>
<text x="608" y="543" fill="#A07A7E" letter-spacing="0.3" font-family="Liberation Sans" font-size="12">포화도(Sr)-압력수두(P)</text>
<rect x="755.5" y="532.5" width="16" height="16" fill="#4169E1" stroke="#000"/>
<text x="773" y="543" fill="#A07A7E" letter-spacing="0.35" font-family="Liberation Sans" font-size="12">포화도(Sr)-투수계수비(K)</text>
</svg>
</body></html>
